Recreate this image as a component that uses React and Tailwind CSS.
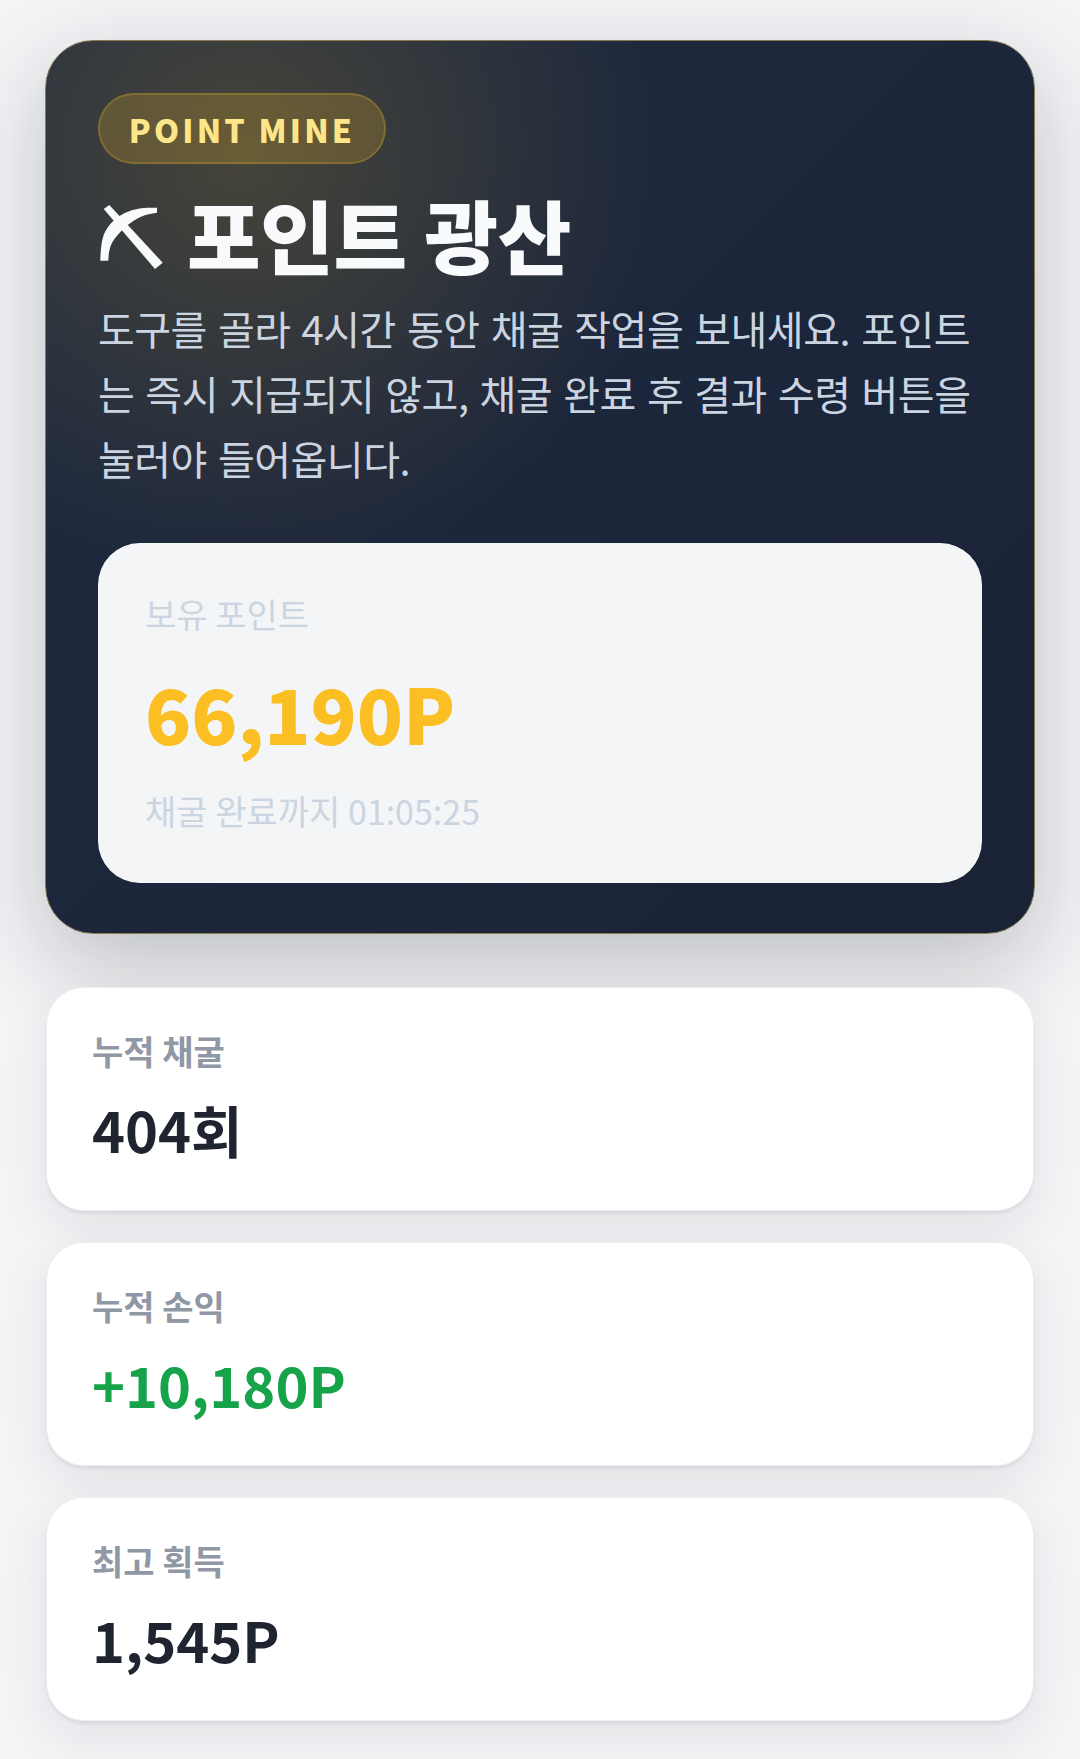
const font = "font-['Noto_Sans_CJK_KR','Noto_Sans',sans-serif]";

function Pick() {
  return (
    <svg viewBox="0 0 64 64" className="ml-[2px] mt-[8px] w-[64px] h-[64px] shrink-0 overflow-visible" fill="#f8fafc" aria-hidden="true">
      <path d="M57 2.700C50 2.700 45 2.700 41 3.300C34 4.300 29 6 24.300 8.300C19 11 14 15 11 18.300C7 23 4 28 2.700 33.300C1.200 39 0.500 47 0.300 55.700L8.300 55.700C8.500 49 9.500 44 11 40C13 35.500 15 33 17.700 30C21 26 24 23 27.700 20C32 17 36 13.500 41 11.700C46 9.500 51 8.500 57 7.700Z" />
      <path d="M3.700 4L9.300 0L62.700 57.700L55 64Z" />
    </svg>
  );
}

function Stat({ label, value, color }) {
  return (
    <div className="mx-[1px] h-[224px] rounded-[38px] bg-white border border-[#eceef1] px-[45px] pt-[39px] shadow-[0_3px_3px_rgba(17,24,39,0.06),0_16px_50px_rgba(17,24,39,0.08)]">
      <div className="text-[34px] leading-[48px] font-bold text-[#9097a5]">{label}</div>
      <div className="mt-[15px]">
        <span className={`text-[56px] leading-[78px] font-bold ${color}`}>{value}</span>
      </div>
    </div>
  );
}

export default function App() {
  return (
    <div className={`${font} min-h-[1759px] bg-[#f3f4f6] px-[45px] pt-[40px]`}>
      <section className="rounded-[48px] border border-[#8c7a55] bg-[radial-gradient(circle_at_20%_13%,rgba(251,191,36,0.18),transparent_38%),linear-gradient(135deg,#1f2b41,#1a2235)] px-[52px] pt-[52px] pb-[50px] shadow-[0_30px_90px_rgba(17,24,39,0.24)]">
        <div className="inline-flex h-[71px] w-[288px] items-center justify-center rounded-full border-2 border-[rgba(251,191,36,0.22)] bg-[rgba(251,191,36,0.2)] text-[32px] font-extrabold tracking-[3.2px] text-[#fde68a]">
          POINT MINE
        </div>
        <h1 className="mt-[20px] flex h-[98px] items-center gap-[23px] text-[80px] font-extrabold leading-[98px] tracking-[-0.4px] text-[#f8fafc]">
          <Pick />
          <span>포인트 광산</span>
        </h1>
        <p className="mt-[14px] text-[40px] leading-[65px] tracking-[-0.5px] [word-spacing:2.6px] text-[#cbd5e1]">
          도구를 골라 4시간 동안 채굴 작업을 보내세요. 포인트는 즉시 지급되지 않고, 채굴 완료 후 결과 수령 버튼을 눌러야 들어옵니다.
        </p>
        <div className="mt-[52px] h-[340px] rounded-[42px] bg-[#f4f5f7] px-[47px] pt-[47px]">
          <div className="text-[34px] leading-[48px] text-[#cbd5e1]">보유 포인트</div>
          <div className="mt-[22px] text-[76px] font-extrabold leading-[104px] text-[#fbbf24]">66,190P</div>
          <div className="mt-[23px] text-[34px] leading-[48px] text-[#cbd5e1]">채굴 완료까지 01:05:25</div>
        </div>
      </section>
      <div className="mt-[53px] flex flex-col gap-[31px]">
        <Stat label="누적 채굴" value="404회" color="text-[#1f2430]" />
        <Stat label="누적 손익" value="+10,180P" color="text-[#16a34a]" />
        <Stat label="최고 획득" value="1,545P" color="text-[#1f2430]" />
      </div>
    </div>
  );
}
